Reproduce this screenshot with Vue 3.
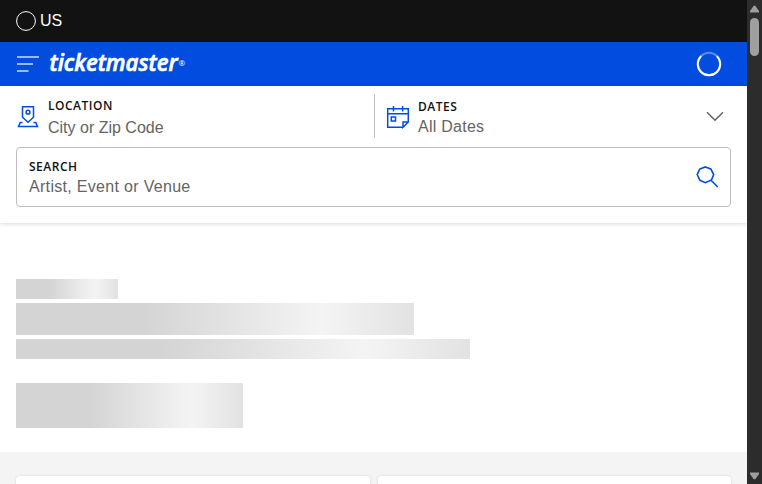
<script setup>
const bars = ['eyebrow', 'title', 'subtitle', 'action']
</script>

<template>
  <div class="window">
    <main class="page">
      <div class="topbar">
        <svg class="flag" width="20" height="20" viewBox="0 0 20 20" fill="none"><circle cx="10" cy="10" r="9.4" stroke="#fff" /></svg>
        <span>US</span>
      </div>
      <header class="brandbar">
        <svg class="menu" width="24" height="18" viewBox="0 0 24 18" fill="none" stroke="#c9e0ff" stroke-width="1.7">
          <path d="M1 2h22M1 9h16M1 16h11.5" />
        </svg>
        <svg class="logo" width="142" height="40" viewBox="0 0 142 40" fill="#fff">
          <text class="wordmark" x="0.5" y="27" textLength="128" lengthAdjust="spacingAndGlyphs">ticketmaster</text>
          <text class="reg" x="129.5" y="22">®</text>
        </svg>
        <svg class="spinner" width="26" height="26" viewBox="0 0 26 26" fill="none" stroke="#fff" stroke-width="2">
          <circle cx="13" cy="13" r="11.2" stroke-opacity=".35" />
          <path d="M5.1 5.1A11.2 11.2 0 1 0 20.9 5.1" />
        </svg>
      </header>
      <section class="finder">
        <div class="filters">
          <div class="field location">
            <svg width="22" height="24" viewBox="0 0 22 24" fill="none" stroke="#024ddf" stroke-width="1.5">
              <path d="M5.5 1.8h11v10.4L11 17.3l-5.5-5.1zM5.5 17.5H3.2L1.5 21.6h19l-1.7-4.1h-2.3" />
              <circle cx="11" cy="7.2" r="1.9" />
            </svg>
            <div class="copy"><b>LOCATION</b><span>City or Zip Code</span></div>
          </div>
          <div class="field dates">
            <svg width="24" height="24" viewBox="0 0 24 24" fill="none" stroke="#024ddf" stroke-width="1.5">
              <path d="M17 22.3H1.7V3.8h20.6V17L17 22.3V17h5.3M1.7 8.8h20.6M7.5 1v5.4M16.6 1v5.4" />
              <path d="M5.3 12h4.2v4H5.3z" />
            </svg>
            <div class="copy"><b>DATES</b><span>All Dates</span></div>
            <svg class="chevron" width="18" height="11" viewBox="0 0 18 11" fill="none" stroke="#666" stroke-width="1.6"><path d="M1 1.2l8 8 8-8" /></svg>
          </div>
        </div>
        <div class="search">
          <div class="copy"><b>SEARCH</b><span>Artist, Event or Venue</span></div>
          <svg width="24" height="24" viewBox="0 0 24 24" fill="none" stroke="#024ddf" stroke-width="1.6">
            <path d="M10.4 1.9l5.4 2 2.9 5.7-2.2 5.3-6.1 2.8-5.5-2.4-2.7-5.7 2.5-5.5zM16 15.2l6.8 6.8" />
          </svg>
        </div>
      </section>
      <section class="hero">
        <div v-for="bar in bars" :key="bar" class="bone" :class="bar"></div>
      </section>
      <section class="cards"><div class="card"></div><div class="card"></div></section>
    </main>
    <aside class="scrollbar">
      <svg width="9" height="8" viewBox="0 0 9 8" fill="#9e9e9e"><path d="M3.7.7h1.6L9 6v1.5H0V6z" /></svg>
      <div class="thumb"></div>
      <svg class="down" width="9" height="8" viewBox="0 0 9 8" fill="#9e9e9e"><path d="M3.7 7.3h1.6L9 2V.5H0V2z" /></svg>
    </aside>
  </div>
</template>

<style>
body { margin: 0; overflow: hidden; }
</style>

<style scoped>
* { box-sizing: border-box; }
svg { display: block; flex: none; }
.window { width: 762px; height: 484px; display: flex; overflow: hidden; background: #fff; font-family: "Liberation Sans", Arial, sans-serif; }
.page { width: 747px; height: 484px; display: flex; flex-direction: column; overflow: hidden; }
.topbar { height: 42px; flex: none; display: flex; align-items: center; gap: 4px; padding-left: 16px; background: #121212; color: #fff; font-size: 16px; line-height: 18px; padding-bottom: 1px; }
.flag { margin-top: 1px; }
.brandbar { height: 44px; flex: none; display: flex; align-items: center; padding: 0 25px 0 16px; background: #024ddf; }
.logo { margin-left: 9px; }
.wordmark { font: italic 600 23px "Open Sans", sans-serif; stroke: #fff; stroke-width: .7px; }
.reg { font: 8px "Open Sans", sans-serif; }
.spinner { margin-left: auto; }
.finder { height: 137px; flex: none; padding: 8px 16px 0; background: #fff; box-shadow: 0 1px 4px rgba(0, 0, 0, .15); }
.filters { height: 44px; display: flex; }
.field { display: flex; align-items: flex-start; }
.location { width: 358px; padding: 11px 0 0 1px; }
.location .copy { margin: -6px 0 0 9px; }
.location .copy span { margin-top: 5px; }
.dates { flex: 1; border-left: 1px solid #bfbfbf; padding: 11px 7px 0 11px; }
.dates .copy { margin: -5px 0 0 8px; }
.dates .copy span { margin-top: 3px; letter-spacing: .25px; }
.chevron { margin: 6px 0 0 auto; }
.copy { display: flex; flex-direction: column; }
.copy b { font: 600 12px/14px "Open Sans", sans-serif; color: #121212; letter-spacing: .5px; }
.copy span { font-size: 16px; line-height: 20px; color: #646464; }
.search { height: 60px; margin-top: 9px; display: flex; justify-content: space-between; align-items: flex-start; padding: 12px 11px 0 12px; border: 1px solid #bfbfbf; border-radius: 4px; }
.search .copy span { margin-top: 3px; letter-spacing: .31px; }
.search svg { margin-top: 5px; }
.hero { height: 229px; flex: none; padding: 56px 16px 0; }
.bone { background: linear-gradient(90deg, #d4d4d4 0%, #d4d4d4 32%, #f4f4f4 77%, #e2e2e2 100%); }
.eyebrow { width: 102px; height: 20px; }
.title { width: 398px; height: 32px; margin-top: 4px; }
.subtitle { width: 454px; height: 20px; margin-top: 4px; }
.action { width: 227px; height: 45px; margin-top: 24px; }
.cards { height: 32px; display: grid; grid-template-columns: 1fr 1fr; gap: 8px; padding: 24px 16px 0; background: #f4f4f4; }
.card { height: 40px; background: #fff; border-radius: 4px; box-shadow: 0 0 3px rgba(0, 0, 0, .12); }
.scrollbar { width: 15px; height: 484px; display: flex; flex-direction: column; align-items: center; padding: 5px 0 4px; background: #2c2c2c; }
.thumb { width: 9px; height: 38px; margin-top: 5px; border-radius: 5px; background: #9f9f9f; }
.down { margin-top: auto; }
</style>
